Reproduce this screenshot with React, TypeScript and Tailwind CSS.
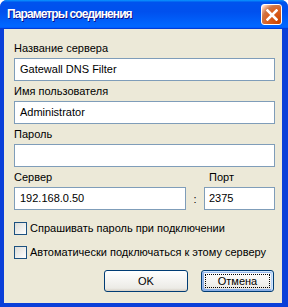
import { ReactNode } from "react";

const font = "font-['Liberation_Sans',Arial,sans-serif]";

function Field({ label, value }: { label: string; value?: string }) {
  return (
    <div className="flex flex-col">
      <div className="h-[13px] text-[11px] leading-[13px] text-black">{label}</div>
      <div className="mt-[3px] flex h-[23px] items-center border border-[#7f9db9] bg-white pl-[5px] text-[11px] text-black">
        {value}
      </div>
    </div>
  );
}

function Check({ children }: { children: ReactNode }) {
  return (
    <div className="flex h-[13px] items-center">
      <div className="h-[13px] w-[13px] border border-[#1c5180] bg-[linear-gradient(135deg,#dcdcd7,#ffffff)]" />
      <span className="ml-[3px] text-[11px] leading-[13px] text-black">{children}</span>
    </div>
  );
}

function Button({ children, focused, width }: { children: ReactNode; focused?: boolean; width: string }) {
  return (
    <div
      className={`relative flex h-[22px] items-center justify-center rounded-[3px] border border-[#003c74] bg-[linear-gradient(180deg,#ffffff,#ecebe6_86%,#d6d0c5)] text-[11px] text-black ${width} ${
        focused
          ? "shadow-[inset_-1px_1px_#cee7ff,inset_1px_2px_#98b8ea,inset_-2px_2px_#bcd4f6,inset_1px_-1px_#89ade4,inset_2px_-2px_#89ade4]"
          : ""
      }`}
    >
      {focused && <div className="absolute inset-[3px] border border-dotted border-black" />}
      {children}
    </div>
  );
}

export default function App() {
  return (
    <div className={`h-[307px] w-[288px] bg-white ${font}`}>
      <div className="flex h-full flex-col overflow-hidden rounded-t-[7px] bg-[#0a3fd9]">
        <div className="flex h-[29px] shrink-0 items-center justify-between bg-[linear-gradient(180deg,#0997ff,#0053ee_8%,#0050ee_40%,#0066ff_88%,#0066ff_93%,#005bff_95%,#003dd7_96%,#003dd7)] pl-[7px] pr-[6px]">
          <span className="text-[12px] font-bold leading-[15px] tracking-[-0.9px] text-white [text-shadow:1px_1px_#0f1089]">
            Параметры соединения
          </span>
          <div className="flex h-[21px] w-[21px] items-center justify-center rounded-[3px] border border-white bg-[radial-gradient(circle_at_90%_90%,#cc4600_0%,#dc6527_55%,#cd7546_70%,#ffccb2_90%,#ffffff_100%)]">
            <svg width="12" height="12" viewBox="0 0 12 12">
              <path d="M1.5 1.5 L10.5 10.5 M10.5 1.5 L1.5 10.5" stroke="#fff" strokeWidth="2.6" strokeLinecap="square" />
            </svg>
          </div>
        </div>
        <div className="ml-[4px] mr-[6px] mb-[4px] flex flex-1 flex-col bg-[#ece9d8] pl-[10px] pr-[7px] pt-[13px]">
          <div className="flex flex-col gap-[4px]">
            <Field label="Название сервера" value="Gatewall DNS Filter" />
            <Field label="Имя пользователя" value="Administrator" />
            <Field label="Пароль" />
            <div className="grid grid-cols-[172px_18px_71px] grid-rows-[13px_23px] gap-y-[3px]">
              <div className="text-[11px] leading-[13px] text-black">Сервер</div>
              <div />
              <div className="pl-[5px] text-[11px] leading-[13px] text-black">Порт</div>
              <div className="flex items-center border border-[#7f9db9] bg-white pl-[5px] text-[11px] text-black">
                192.168.0.50
              </div>
              <div className="flex items-center justify-center pt-[2px] text-[11px] text-black">:</div>
              <div className="flex items-center border border-[#7f9db9] bg-white pl-[4px] text-[11px] text-black">
                2375
              </div>
            </div>
          </div>
          <div className="mt-[12px] flex flex-col gap-[11px]">
            <Check>Спрашивать пароль при подключении</Check>
            <Check>Автоматически подключаться к этому серверу</Check>
          </div>
          <div className="mt-[11px] flex justify-end gap-[13px] pr-[1px]">
            <Button width="w-[84px]">OK</Button>
            <Button width="w-[73px]" focused>
              Отмена
            </Button>
          </div>
        </div>
      </div>
    </div>
  );
}
